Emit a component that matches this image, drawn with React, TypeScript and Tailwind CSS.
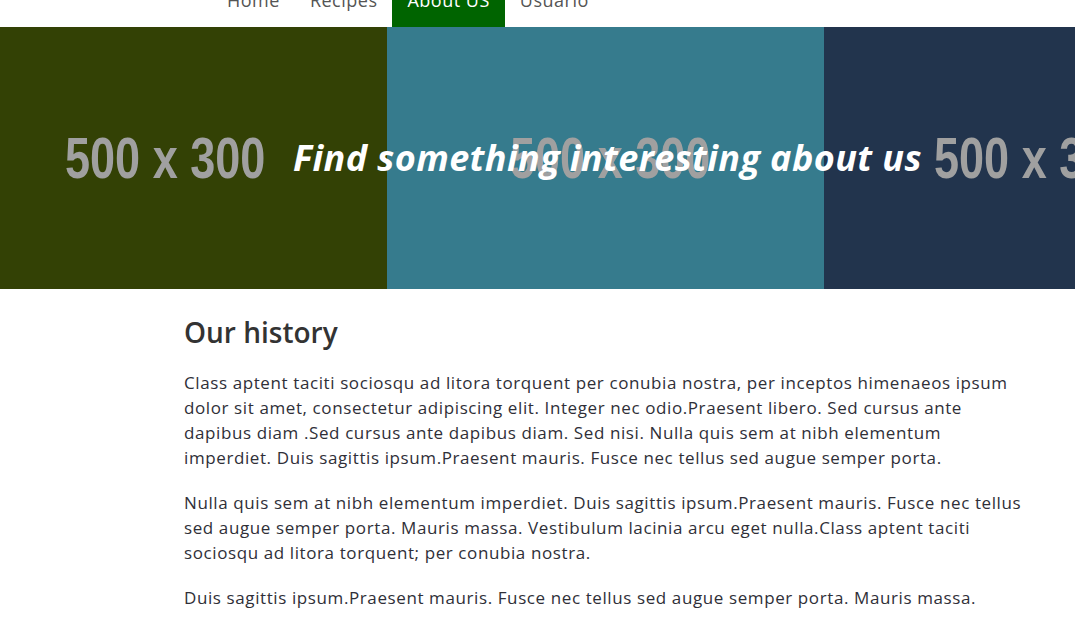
import { ReactNode } from 'react'

const navItems = ['Home', 'Recipes', 'About US', 'Usuario']

function NavBar() {
  return (
    <nav className="h-[27px] overflow-hidden bg-white">
      <ul className="-mt-[26px] flex pl-[212px]">
        {navItems.map((item) => (
          <li
            key={item}
            className={
              item === 'About US'
                ? 'flex h-[53px] items-center bg-[#006400] px-[15px] text-[18px] tracking-[0.5px] text-white'
                : 'flex h-[53px] items-center px-[15px] text-[18px] tracking-[0.5px] text-[#555]'
            }
          >
            {item}
          </li>
        ))}
      </ul>
    </nav>
  )
}

function Tile({ bg, width, pad }: { bg: string; width: string; pad: string }) {
  return (
    <div className={`flex h-full shrink-0 items-center overflow-hidden ${bg} ${width} ${pad}`}>
      <span
        className="origin-left scale-x-[0.79] whitespace-nowrap text-[57px] font-bold leading-none text-[#a0a0a0]"
        style={{ fontFamily: '"Liberation Sans", Arial, sans-serif' }}
      >
        500 x 300
      </span>
    </div>
  )
}

function Hero({ children }: { children: ReactNode }) {
  return (
    <section className="relative flex h-[262px] overflow-hidden">
      <Tile bg="bg-[#334105]" width="w-[387px]" pad="pl-[65px]" />
      <Tile bg="bg-[#367b8d]" width="w-[437px]" pad="pl-[123px]" />
      <Tile bg="bg-[#22344d]" width="w-[251px]" pad="pl-[110px]" />
      <div className="absolute inset-0 flex items-center pl-[293px]">{children}</div>
    </section>
  )
}

export default function App() {
  return (
    <div className="min-h-[617px] bg-white" style={{ fontFamily: '"Open Sans", Lato, sans-serif' }}>
      <NavBar />
      <Hero>
        <h1 className="whitespace-nowrap text-[36px] font-bold italic tracking-[0.4px] text-white">
          Find something interesting about us
        </h1>
      </Hero>

      <main className="pl-[184px] pr-[48px] pt-[26px] text-[#2f2f38]">
        <h2 className="mb-[21px] text-[28px] font-semibold leading-[34px] text-[#333]">Our history</h2>
        <div className="space-y-[20px] text-[17px] leading-[25px] tracking-[0.6px]">
          <p>
            Class aptent taciti sociosqu ad litora torquent per conubia nostra, per inceptos himenaeos ipsum dolor sit
            amet, consectetur adipiscing elit. Integer nec odio.Praesent libero. Sed cursus ante dapibus diam .Sed
            cursus ante dapibus diam. Sed nisi. Nulla quis sem at nibh elementum imperdiet. Duis sagittis
            ipsum.Praesent mauris. Fusce nec tellus sed augue semper porta.
          </p>
          <p>
            Nulla quis sem at nibh elementum imperdiet. Duis sagittis ipsum.Praesent mauris. Fusce nec tellus sed augue
            semper porta. Mauris massa. Vestibulum lacinia arcu eget nulla.Class aptent taciti sociosqu ad litora
            torquent; per conubia nostra.
          </p>
          <p>
            Duis sagittis ipsum.Praesent mauris. Fusce nec tellus sed augue semper porta. Mauris massa. Vestibulum
            lacinia arcu eget nulla. Class aptent taciti sociosqu ad litora torquent per conubia nostra, per inceptos
            himenaeos.
          </p>
        </div>
      </main>
    </div>
  )
}
